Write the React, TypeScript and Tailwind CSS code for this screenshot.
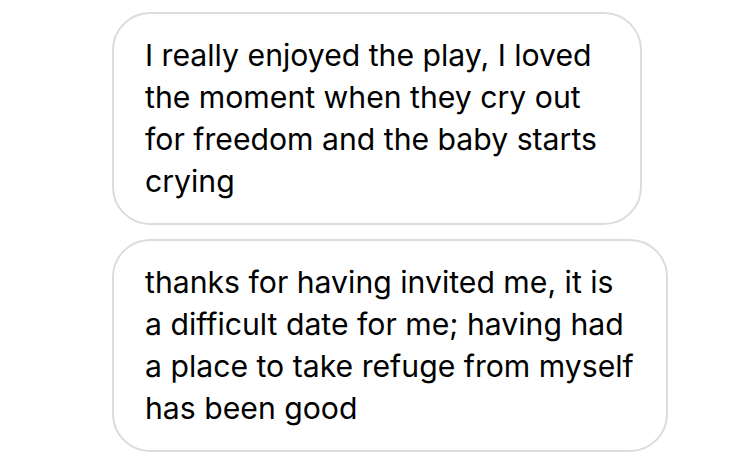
const messages = [
  {
    width: "w-[530px]",
    lines: [
      "I really enjoyed the play, I loved",
      "the moment when they cry out",
      "for freedom and the baby starts",
      "crying",
    ],
  },
  {
    width: "w-[556px]",
    lines: [
      "thanks for having invited me, it is",
      "a difficult date for me; having had",
      "a place to take refuge from myself",
      "has been good",
    ],
  },
];

export default function App() {
  return (
    <div className="w-[750px] h-[461px] bg-white pt-[12px] pl-[112px] flex flex-col gap-[14px] font-['Inter',sans-serif]">
      {messages.map((m, i) => (
        <div
          key={i}
          className={`${m.width} h-[213px] border-2 border-[#dcdcdc] rounded-[38px] px-[31px] py-[20px] text-black text-[30.2px] leading-[42px]`}
        >
          {m.lines.map((line) => (
            <div key={line} className="whitespace-nowrap">
              {line}
            </div>
          ))}
        </div>
      ))}
    </div>
  );
}
